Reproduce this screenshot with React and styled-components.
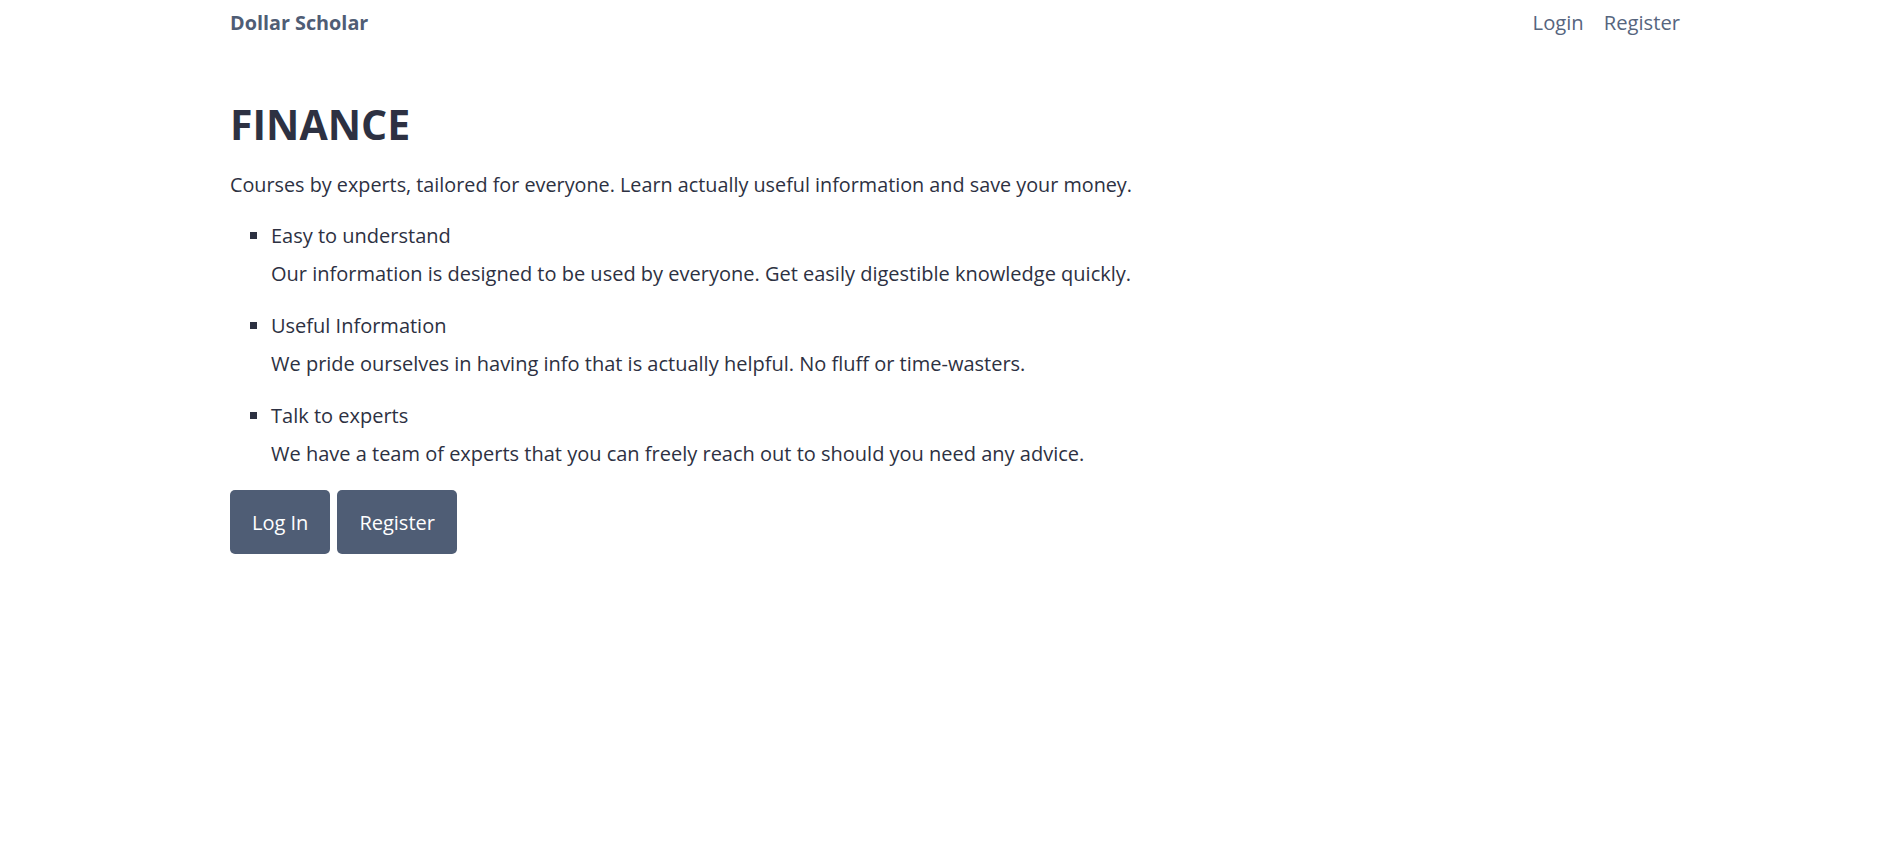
import React from 'react';
import styled, { createGlobalStyle } from 'styled-components';

const GlobalStyle = createGlobalStyle`
    body {
        margin: 0;
        background: #ffffff;
        color: #2d3142;
        font-family: "Segoe UI", "Open Sans", "Noto Sans", sans-serif;
    }
`;

const Container = styled.div`
    max-width: 1450px;
    margin: 0 auto;
    padding-left: 8px;
`;

const NavBar = styled.nav`
    display: flex;
    align-items: center;
    justify-content: space-between;
    height: 45px;
`;

const Brand = styled.a`
    font-size: 19.8px;
    font-weight: 700;
    color: #4f5d75;
    text-decoration: none;
`;

const NavLinks = styled.div`
    display: flex;
    gap: 20px;
    margin-bottom: 2px;
`;

const NavLink = styled.a`
    font-size: 20.2px;
    color: #56657e;
    text-decoration: none;
`;

const Title = styled.h1`
    margin: 53px 0 20px;
    font-size: 41px;
    font-weight: 700;
    line-height: 52px;
    color: #2d3142;
`;

const Lead = styled.p`
    margin: 0 0 21px;
    font-size: 19.8px;
    line-height: 30px;
`;

const Features = styled.ul`
    margin: 0 0 21px;
    padding-left: 41px;
    list-style: square;
`;

const Feature = styled.li`
    font-size: 20px;
    line-height: 30px;
    margin-bottom: 22px;

    &:last-child {
        margin-bottom: 0;
    }
`;

const FeatureText = styled.p`
    margin: 8px 0 0;
`;

const Actions = styled.div`
    display: flex;
    gap: 7px;
`;

const Btn = styled.button`
    height: 64px;
    padding: 0 22px;
    border: none;
    border-radius: 5px;
    background: #4f5d75;
    color: #ffffff;
    font-family: inherit;
    font-size: 20px;
    cursor: pointer;
`;

const features = [
    {
        title: 'Easy to understand',
        text: 'Our information is designed to be used by everyone. Get easily digestible knowledge quickly.',
    },
    {
        title: 'Useful Information',
        text: 'We pride ourselves in having info that is actually helpful. No fluff or time-wasters.',
    },
    {
        title: 'Talk to experts',
        text: 'We have a team of experts that you can freely reach out to should you need any advice.',
    },
];

const App = () => {
    return (
        <>
            <GlobalStyle />
            <Container>
                <NavBar>
                    <Brand href="#">Dollar Scholar</Brand>
                    <NavLinks>
                        <NavLink href="#">Login</NavLink>
                        <NavLink href="#">Register</NavLink>
                    </NavLinks>
                </NavBar>
                <main>
                    <Title>FINANCE</Title>
                    <Lead>
                        Courses by experts, tailored for everyone. Learn actually useful
                        information and save your money.
                    </Lead>
                    <Features>
                        {features.map((f) => (
                            <Feature key={f.title}>
                                {f.title}
                                <FeatureText>{f.text}</FeatureText>
                            </Feature>
                        ))}
                    </Features>
                    <Actions>
                        <Btn>Log In</Btn>
                        <Btn>Register</Btn>
                    </Actions>
                </main>
            </Container>
        </>
    );
};

export default App;
